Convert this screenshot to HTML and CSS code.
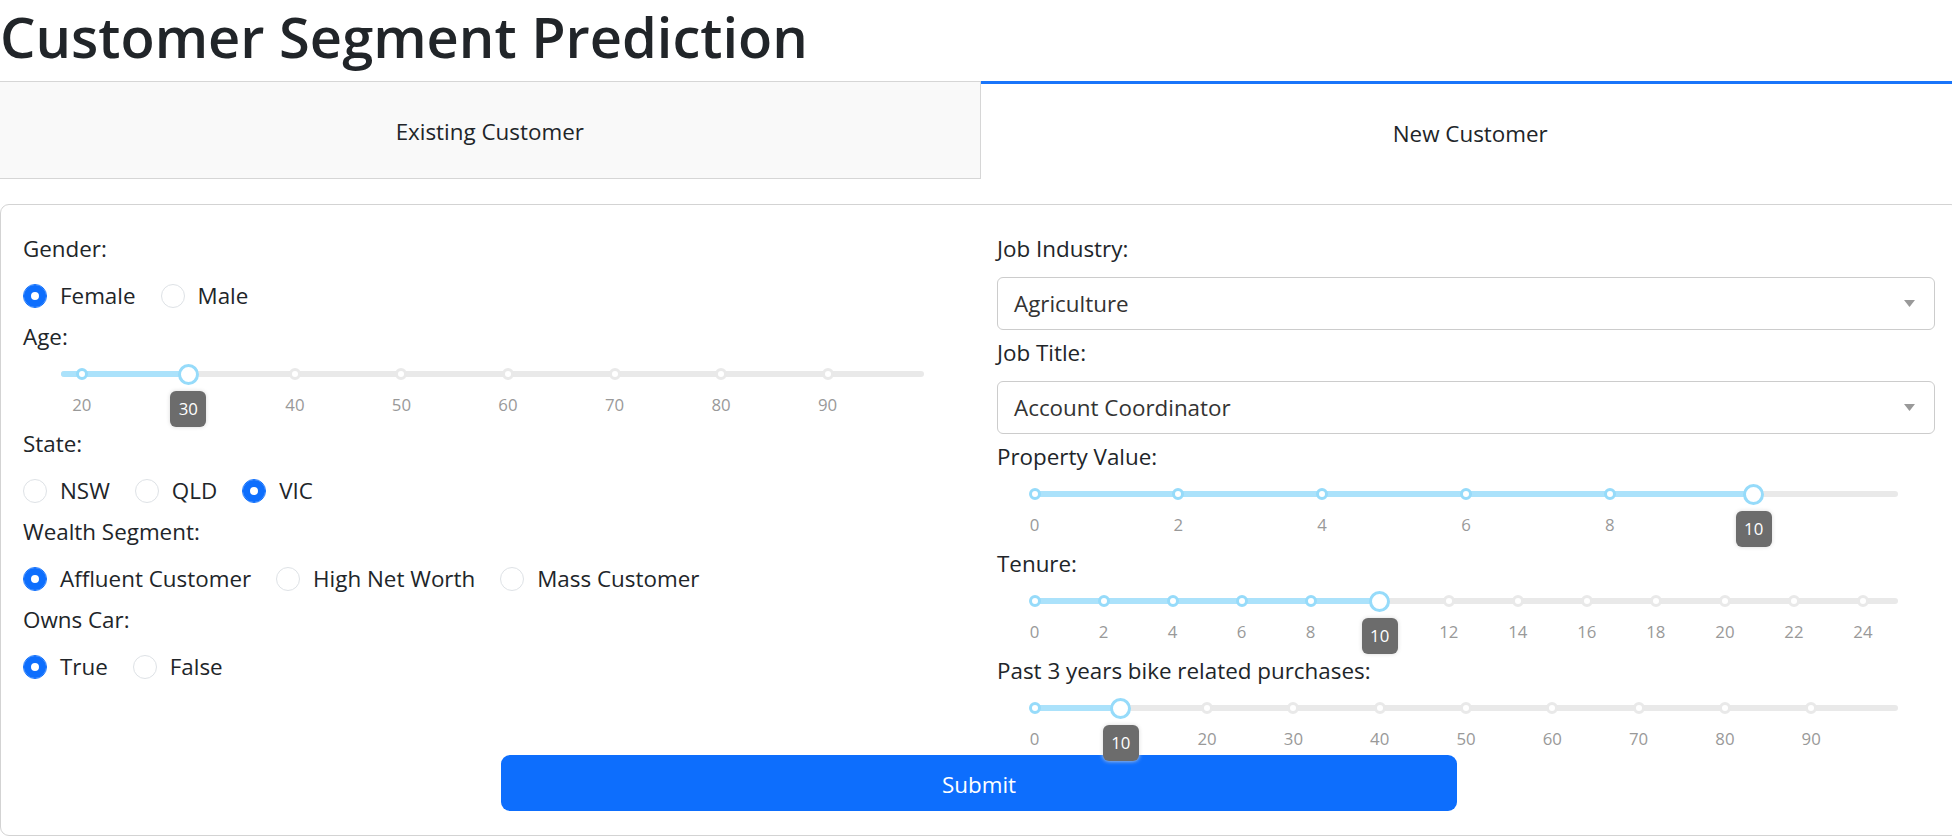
FILE: index.html
```html
<!DOCTYPE html>
<html lang="en">
<head>
<meta charset="utf-8">
<title>Customer Segment Prediction</title>
<link rel="stylesheet" href="styles.css">
</head>
<body>
<div class="app">
  <h1 class="title">Customer Segment Prediction</h1>

  <div class="tabs">
    <div class="tab tab-inactive">Existing Customer</div>
    <div class="tab tab-active">New Customer</div>
  </div>

  <div class="card">
    <div class="cols">
      <div class="col">
        <label class="field-label">Gender:</label>
        <div class="radios">
          <span class="radio-item"><span class="radio checked"></span>Female</span>
          <span class="radio-item"><span class="radio"></span>Male</span>
        </div>

        <label class="field-label">Age:</label>
        <div class="slider">
          <div class="rail"></div>
          <div class="track" style="width:14.815%"></div>
          <span class="dot active" style="left:2.469%"></span>
          <span class="dot active" style="left:14.815%"></span>
          <span class="dot" style="left:27.160%"></span>
          <span class="dot" style="left:39.506%"></span>
          <span class="dot" style="left:51.852%"></span>
          <span class="dot" style="left:64.198%"></span>
          <span class="dot" style="left:76.543%"></span>
          <span class="dot" style="left:88.889%"></span>
          <span class="mark" style="left:2.469%">20</span>
          <span class="mark" style="left:27.160%">40</span>
          <span class="mark" style="left:39.506%">50</span>
          <span class="mark" style="left:51.852%">60</span>
          <span class="mark" style="left:64.198%">70</span>
          <span class="mark" style="left:76.543%">80</span>
          <span class="mark" style="left:88.889%">90</span>
          <span class="handle" style="left:14.815%"></span>
          <span class="tip" style="left:14.815%">30</span>
        </div>

        <label class="field-label">State:</label>
        <div class="radios">
          <span class="radio-item"><span class="radio"></span>NSW</span>
          <span class="radio-item"><span class="radio"></span>QLD</span>
          <span class="radio-item"><span class="radio checked"></span>VIC</span>
        </div>

        <label class="field-label">Wealth Segment:</label>
        <div class="radios">
          <span class="radio-item"><span class="radio checked"></span>Affluent Customer</span>
          <span class="radio-item"><span class="radio"></span>High Net Worth</span>
          <span class="radio-item"><span class="radio"></span>Mass Customer</span>
        </div>

        <label class="field-label">Owns Car:</label>
        <div class="radios">
          <span class="radio-item"><span class="radio checked"></span>True</span>
          <span class="radio-item"><span class="radio"></span>False</span>
        </div>
      </div>

      <div class="col">
        <label class="field-label">Job Industry:</label>
        <div class="select">
          <span>Agriculture</span>
          <svg class="caret" width="11" height="7" viewBox="0 0 11 7"><polygon points="0,0 11,0 5.5,7" fill="#999"/></svg>
        </div>

        <label class="field-label">Job Title:</label>
        <div class="select">
          <span>Account Coordinator</span>
          <svg class="caret" width="11" height="7" viewBox="0 0 11 7"><polygon points="0,0 11,0 5.5,7" fill="#999"/></svg>
        </div>

        <label class="field-label">Property Value:</label>
        <div class="slider">
          <div class="rail"></div>
          <div class="track" style="width:83.333%"></div>
          <span class="dot active" style="left:0%"></span>
          <span class="dot active" style="left:16.667%"></span>
          <span class="dot active" style="left:33.333%"></span>
          <span class="dot active" style="left:50%"></span>
          <span class="dot active" style="left:66.667%"></span>
          <span class="mark" style="left:0%">0</span>
          <span class="mark" style="left:16.667%">2</span>
          <span class="mark" style="left:33.333%">4</span>
          <span class="mark" style="left:50%">6</span>
          <span class="mark" style="left:66.667%">8</span>
          <span class="handle" style="left:83.333%"></span>
          <span class="tip" style="left:83.333%">10</span>
        </div>

        <label class="field-label">Tenure:</label>
        <div class="slider">
          <div class="rail"></div>
          <div class="track" style="width:40%"></div>
          <span class="dot active" style="left:0%"></span>
          <span class="dot active" style="left:8%"></span>
          <span class="dot active" style="left:16%"></span>
          <span class="dot active" style="left:24%"></span>
          <span class="dot active" style="left:32%"></span>
          <span class="dot" style="left:48%"></span>
          <span class="dot" style="left:56%"></span>
          <span class="dot" style="left:64%"></span>
          <span class="dot" style="left:72%"></span>
          <span class="dot" style="left:80%"></span>
          <span class="dot" style="left:88%"></span>
          <span class="dot" style="left:96%"></span>
          <span class="mark" style="left:0%">0</span>
          <span class="mark" style="left:8%">2</span>
          <span class="mark" style="left:16%">4</span>
          <span class="mark" style="left:24%">6</span>
          <span class="mark" style="left:32%">8</span>
          <span class="mark" style="left:48%">12</span>
          <span class="mark" style="left:56%">14</span>
          <span class="mark" style="left:64%">16</span>
          <span class="mark" style="left:72%">18</span>
          <span class="mark" style="left:80%">20</span>
          <span class="mark" style="left:88%">22</span>
          <span class="mark" style="left:96%">24</span>
          <span class="handle" style="left:40%"></span>
          <span class="tip" style="left:40%">10</span>
        </div>

        <label class="field-label">Past 3 years bike related purchases:</label>
        <div class="slider">
          <div class="rail"></div>
          <div class="track" style="width:10%"></div>
          <span class="dot active" style="left:0%"></span>
          <span class="dot" style="left:20%"></span>
          <span class="dot" style="left:30%"></span>
          <span class="dot" style="left:40%"></span>
          <span class="dot" style="left:50%"></span>
          <span class="dot" style="left:60%"></span>
          <span class="dot" style="left:70%"></span>
          <span class="dot" style="left:80%"></span>
          <span class="dot" style="left:90%"></span>
          <span class="mark" style="left:0%">0</span>
          <span class="mark" style="left:20%">20</span>
          <span class="mark" style="left:30%">30</span>
          <span class="mark" style="left:40%">40</span>
          <span class="mark" style="left:50%">50</span>
          <span class="mark" style="left:60%">60</span>
          <span class="mark" style="left:70%">70</span>
          <span class="mark" style="left:80%">80</span>
          <span class="mark" style="left:90%">90</span>
          <span class="handle" style="left:10%"></span>
          <span class="tip" style="left:10%">10</span>
        </div>
      </div>
    </div>

    <button class="submit" type="button">Submit</button>
  </div>
</div>
</body>
</html>
```

FILE: styles.css
```css
html, body {
  margin: 0;
  padding: 0;
  background: #fff;
}

body {
  overflow: hidden;
  font-family: "Open Sans", "Noto Sans", sans-serif;
  font-size: 22.4px;
  line-height: 36px;
  color: #212529;
}

.app {
  width: 1960px;
}

.title {
  margin: 0 0 9px;
  font-size: 56px;
  font-weight: 600;
  line-height: 72px;
  color: #212529;
}

.tabs {
  display: flex;
  height: 98px;
}

.tab {
  flex: 1 1 0;
  display: flex;
  align-items: center;
  justify-content: center;
  box-sizing: border-box;
  padding-top: 4px;
  color: #212529;
}

.tab-inactive {
  background: #f9f9f9;
  border: 1px solid #d6d6d6;
  border-left: none;
}

.tab-active {
  background: #fff;
  border-top: 3px solid #1975fa;
}

.card {
  margin-top: 25px;
  border: 1px solid #d3d3d3;
  border-radius: 9px;
  padding: 21px 24px 24px 22px;
}

.cols {
  display: grid;
  grid-template-columns: 1fr 1fr;
  column-gap: 36px;
}

.col {
  display: flex;
  flex-direction: column;
}

.field-label {
  display: block;
  margin: 5px 0 10px;
  line-height: 36px;
}

.radios {
  display: flex;
  align-items: center;
  height: 37px;
}

.radio-item {
  display: inline-flex;
  align-items: center;
  gap: 13px;
  margin-right: 25px;
}

.radio {
  display: inline-block;
  width: 24px;
  height: 24px;
  box-sizing: border-box;
  border-radius: 50%;
  border: 1px solid #dee2e6;
  background: #fff;
}

.radio.checked {
  border-color: #0d6efd;
  box-shadow: inset 0 0 0 7px #0d6efd;
}

.select {
  display: flex;
  align-items: center;
  justify-content: space-between;
  height: 53px;
  box-sizing: border-box;
  border: 1px solid #ccc;
  border-radius: 6px;
  padding: 0 19px 0 16px;
  color: #333;
}

.caret {
  display: block;
}

.slider {
  position: relative;
  height: 56px;
  margin: 0 37.5px;
}

.rail {
  position: absolute;
  left: 0;
  right: 0;
  top: 6px;
  height: 6px;
  border-radius: 6px;
  background: #e9e9e9;
}

.track {
  position: absolute;
  left: 0;
  top: 6px;
  height: 6px;
  border-radius: 6px;
  background: #abe2fb;
}

.dot {
  position: absolute;
  top: 3px;
  width: 12px;
  height: 12px;
  margin-left: -6px;
  box-sizing: border-box;
  border: 3px solid #e9e9e9;
  border-radius: 50%;
  background: #fff;
}

.dot.active {
  border-color: #96dbfa;
}

.handle {
  position: absolute;
  top: -1.5px;
  width: 21px;
  height: 21px;
  margin-left: -10.5px;
  box-sizing: border-box;
  border: 3px solid #96dbfa;
  border-radius: 50%;
  background: #fff;
  z-index: 2;
}

.mark {
  position: absolute;
  top: 30px;
  transform: translateX(-50%);
  font-size: 16.8px;
  line-height: 20px;
  color: #999;
}

.tip {
  position: absolute;
  top: 26px;
  width: 36px;
  height: 36px;
  margin-left: -18px;
  border-radius: 6px;
  background: #6c6c6c;
  box-shadow: 0 0 4px #d9d9d9;
  color: #fff;
  font-size: 16.8px;
  line-height: 36px;
  text-align: center;
  z-index: 3;
}

.submit {
  display: block;
  width: 50%;
  height: 56px;
  margin: 0 auto;
  border: none;
  border-radius: 9px;
  background: #0d6efd;
  color: #fff;
  font-family: inherit;
  font-size: 22.4px;
  line-height: 36px;
  padding: 3px 0 0;
}
```
